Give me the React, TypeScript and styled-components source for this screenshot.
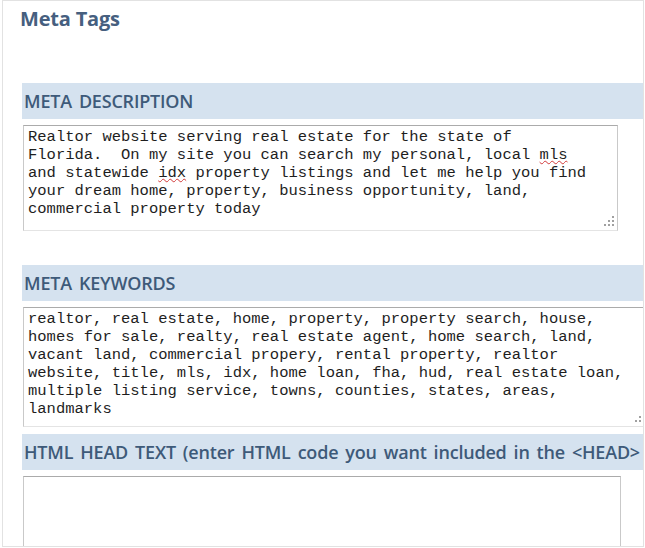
import styled, { createGlobalStyle } from "styled-components";

const GlobalStyle = createGlobalStyle`
  html, body {
    margin: 0;
    padding: 0;
    background: #ffffff;
  }
`;

const Frame = styled.div`
  box-sizing: border-box;
  margin-left: 2px;
  width: 642px;
  height: 547px;
  border: 1px solid #e2e2e2;
  overflow: hidden;
  font-family: "Open Sans", "Noto Sans", sans-serif;
`;

const Title = styled.h1`
  margin: 6px 0 0 17px;
  font-size: 20px;
  line-height: 24px;
  font-weight: 700;
  letter-spacing: -0.2px;
  color: #465f7f;
`;

const Section = styled.section<{ $top: number }>`
  margin: ${(p) => p.$top}px 0 0 19px;
`;

const Band = styled.h2`
  margin: 0;
  height: 36px;
  padding-left: 2px;
  background: #d5e2ef;
  font-size: 18px;
  font-weight: 600;
  letter-spacing: -0.2px;
  word-spacing: 2.5px;
  line-height: 36px;
  color: #3e5a79;
  white-space: nowrap;
  overflow: hidden;
`;

const Box = styled.div<{ $width: number; $height: number }>`
  position: relative;
  box-sizing: border-box;
  margin: 6px 0 0 1px;
  width: ${(p) => p.$width}px;
  height: ${(p) => p.$height}px;
  padding: 2px 4px;
  border: 1px solid #c9c9c9;
  border-top-color: #ababab;
  border-bottom-color: #e4e4e4;
  background: #fff;
  font-family: "Liberation Mono", "Courier New", monospace;
  font-size: 15.5px;
  line-height: 18px;
  color: #1e1e1e;
  white-space: pre;
`;

const Misspelt = styled.span`
  text-decoration: underline wavy #d23a3a;
  text-decoration-thickness: 1px;
  text-underline-offset: 1px;
`;

const Grip = styled.svg`
  position: absolute;
  right: 3px;
  bottom: 4px;
`;

function ResizeGrip() {
  const dots = [
    [8, 0],
    [4, 4],
    [8, 4],
    [0, 8],
    [4, 8],
    [8, 8],
  ];
  return (
    <Grip width="10" height="10" viewBox="0 0 10 10">
      {dots.map(([x, y]) => (
        <rect key={`${x}-${y}`} x={x} y={y} width="2" height="2" fill="#a0a0a0" />
      ))}
    </Grip>
  );
}

const keywords = [
  "realtor, real estate, home, property, property search, house,",
  "homes for sale, realty, real estate agent, home search, land,",
  "vacant land, commercial propery, rental property, realtor",
  "website, title, mls, idx, home loan, fha, hud, real estate loan,",
  "multiple listing service, towns, counties, states, areas,",
  "landmarks",
].join("\n");

export default function App() {
  return (
    <>
      <GlobalStyle />
      <Frame>
        <Title>Meta Tags</Title>

        <Section $top={52}>
          <Band>META DESCRIPTION</Band>
          <Box $width={595} $height={106}>
            {"Realtor website serving real estate for the state of\nFlorida.  On my site you can search my personal, local "}
            <Misspelt>mls</Misspelt>
            {"\nand statewide "}
            <Misspelt>idx</Misspelt>
            {" property listings and let me help you find\nyour dream home, property, business opportunity, land,\ncommercial property today"}
            <ResizeGrip />
          </Box>
        </Section>

        <Section $top={34}>
          <Band>META KEYWORDS</Band>
          <Box $width={626} $height={120}>
            {keywords}
            <ResizeGrip />
          </Box>
        </Section>

        <Section $top={7}>
          <Band>HTML HEAD TEXT (enter HTML code you want included in the &lt;HEAD&gt; section)</Band>
          <Box $width={598} $height={106}>
            <ResizeGrip />
          </Box>
        </Section>
      </Frame>
    </>
  );
}
